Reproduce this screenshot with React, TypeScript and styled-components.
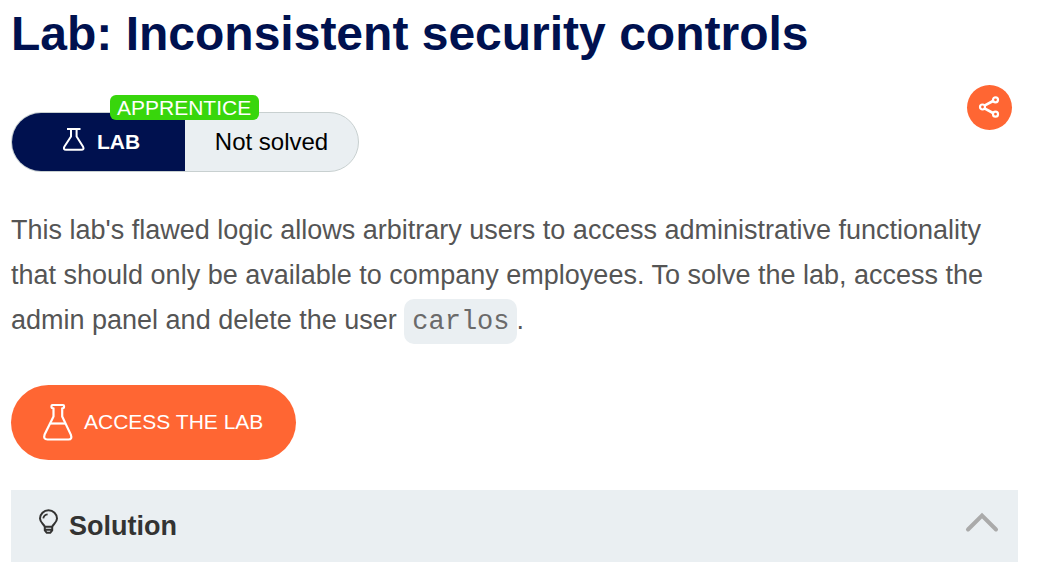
import React from "react";
import styled, { createGlobalStyle } from "styled-components";

const GlobalStyle = createGlobalStyle`
  *, *::before, *::after { box-sizing: border-box; }
  body {
    margin: 0;
    background: #ffffff;
    color: #555555;
    font-family: "Liberation Sans", Arial, Helvetica, sans-serif;
  }
`;

const Page = styled.main`
  padding: 4px 38px 12px 11px;
`;

const Title = styled.h1`
  margin: 0;
  color: #00114f;
  font-size: 48px;
  line-height: 60px;
  font-weight: 700;
`;

const MetaRow = styled.div`
  display: flex;
  justify-content: space-between;
  align-items: flex-start;
  margin-top: 20px;
  padding-right: 6px;
`;

const StatusPill = styled.div`
  position: relative;
  display: grid;
  grid-template-columns: 1fr 1fr;
  width: 348px;
  height: 60px;
  margin-top: 28px;
  border: 1px solid #c8d0d0;
  border-radius: 30px;
  background: #eaeff2;
`;

const LabLabel = styled.span`
  display: flex;
  align-items: center;
  justify-content: center;
  gap: 12px;
  padding-left: 6px;
  border-radius: 30px 0 0 30px;
  background: #00114f;
  color: #ffffff;
  font-size: 21px;
  font-weight: 700;
`;

const FlaskIcon = styled.svg`
  margin-bottom: 6px;
`;

const StatusLabel = styled.span`
  display: flex;
  align-items: center;
  justify-content: center;
  color: #000000;
  font-size: 24px;
`;

const LevelBadge = styled.span`
  position: absolute;
  top: -18px;
  left: 98px;
  padding: 0 8px 0 7px;
  border-radius: 6px;
  background: #38d60c;
  color: #ffffff;
  font-size: 21px;
  line-height: 25px;
`;

const ShareButton = styled.button`
  display: flex;
  align-items: center;
  justify-content: center;
  width: 45px;
  height: 45px;
  margin-top: 1px;
  padding: 0 2px 2px 0;
  border: 0;
  border-radius: 50%;
  background: #ff6633;
  color: #ffffff;
  cursor: pointer;
`;

const Description = styled.p`
  margin: 36px 0 0;
  font-size: 27px;
  line-height: 45px;
`;

const Code = styled.code`
  display: inline-block;
  padding: 9px 7px 7px 8px;
  border-radius: 10px;
  background: #eaeff2;
  color: #6a6a6a;
  font-family: "Liberation Mono", "Courier New", monospace;
  font-size: 27px;
  line-height: 29px;
  vertical-align: middle;
`;

const AccessLink = styled.a`
  display: inline-flex;
  align-items: center;
  gap: 10px;
  height: 75px;
  margin-top: 41px;
  padding: 0 33px 2px 31px;
  border-radius: 38px;
  background: #ff6633;
  color: #ffffff;
  font-size: 21px;
  text-decoration: none;
  text-transform: uppercase;
`;

const Solution = styled.details`
  margin-top: 30px;
  background: #eaeff2;
`;

const SolutionHeader = styled.summary`
  display: flex;
  align-items: center;
  gap: 10px;
  height: 72px;
  padding: 0 19px 0 27px;
  color: #333332;
  font-size: 27px;
  font-weight: 700;
  list-style: none;
  cursor: pointer;
`;

const BulbIcon = styled.svg`
  margin-bottom: 8px;
`;

const Chevron = styled.svg`
  margin: 0 0 8px auto;
`;

export default function App() {
  return (
    <>
      <GlobalStyle />
      <Page>
        <Title>Lab: Inconsistent security controls</Title>
        <MetaRow>
          <StatusPill>
            <LabLabel>
              <FlaskIcon width="22" height="24" viewBox="0 0 22 24" fill="none" stroke="currentColor" strokeWidth="2" strokeLinejoin="round" aria-hidden="true">
                <path d="M4 2H17.5" />
                <path d="M8 2V9.5L1.3 19.8Q0 22.8 3 22.8H18.4Q21.4 22.8 20.1 19.8L13.6 9.5V2" />
              </FlaskIcon>
              LAB
            </LabLabel>
            <StatusLabel>Not solved</StatusLabel>
            <LevelBadge>APPRENTICE</LevelBadge>
          </StatusPill>
          <ShareButton type="button" aria-label="Share">
            <svg width="22" height="24" viewBox="0 0 22 24" fill="none" stroke="currentColor" strokeWidth="2.2" aria-hidden="true">
              <path d="M6 10.8L15 6M6 13.2L15 18" strokeWidth="2.6" />
              <circle cx="4.5" cy="12" r="2.5" />
              <circle cx="17.5" cy="4.8" r="2.5" />
              <circle cx="17.5" cy="19.2" r="2.5" />
            </svg>
          </ShareButton>
        </MetaRow>
        <Description>
          This lab's flawed logic allows arbitrary users to access administrative functionality that should only be
          available to company employees. To solve the lab, access the admin panel and delete the user{" "}
          <Code>carlos</Code>.
        </Description>
        <AccessLink href="#lab">
          <svg width="32" height="38" viewBox="0 0 32 38" fill="none" stroke="currentColor" strokeWidth="2.2" strokeLinejoin="round" aria-hidden="true">
            <path d="M10.5 2H21Q22 2 22 3V4Q22 5.3 20.2 5.3V13.5L28.8 31.6Q30.6 36.5 26.5 36.5H5.5Q1 36.5 2.6 31.6L11.5 13.5V5.3Q9.5 5.3 9.5 4V3Q9.5 2 10.5 2Z" />
            <path d="M8.3 20.5H23.5" />
          </svg>
          Access the lab
        </AccessLink>
        <Solution>
          <SolutionHeader>
            <BulbIcon width="21" height="26" viewBox="0 0 21 26" fill="none" stroke="currentColor" strokeWidth="2" strokeLinejoin="round" aria-hidden="true">
              <path d="M6.8 17.8C6.3 15.3 2 13.7 2 9.6A8.5 8.3 0 0 1 19 9.6C19 13.7 14.7 15.3 14.2 17.8Z" />
              <path d="M5.3 9.3Q5.8 5.8 9.6 5.3" strokeWidth="1.8" />
              <path d="M6.8 17.8V21.4L8.8 23.8H12.2L14.2 21.4V17.8M6.8 20.8H14.2" />
            </BulbIcon>
            Solution
            <Chevron width="34" height="22" viewBox="0 0 34 22" fill="none" stroke="#aaaaaa" strokeWidth="4" strokeLinecap="round" aria-hidden="true">
              <path d="M3 18.5L17 4.5L31 18.5" />
            </Chevron>
          </SolutionHeader>
        </Solution>
      </Page>
    </>
  );
}
